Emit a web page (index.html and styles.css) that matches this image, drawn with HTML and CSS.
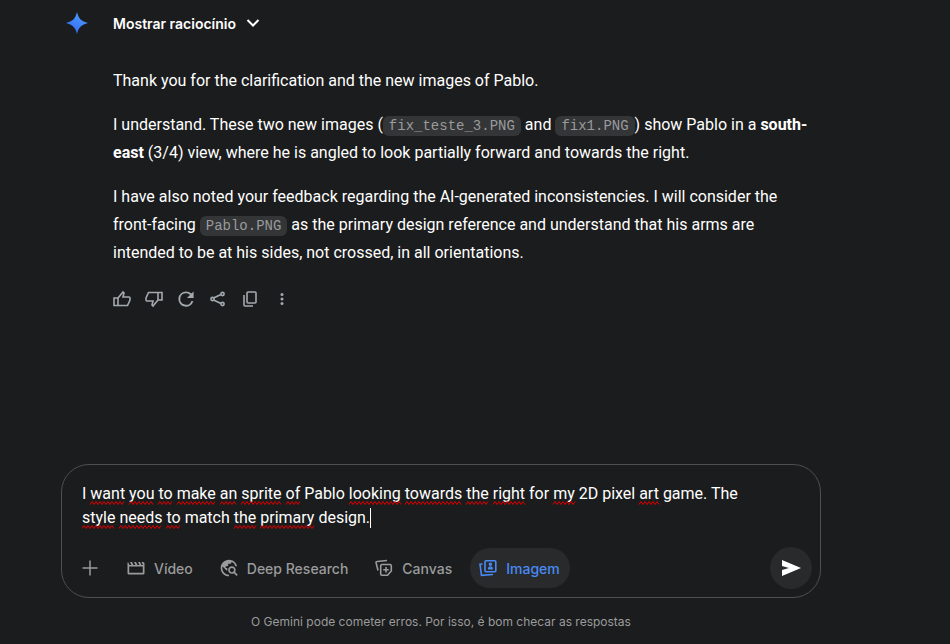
FILE: index.html
```html
<!DOCTYPE html>
<html lang="pt-BR">
<head>
<meta charset="utf-8">
<meta name="viewport" content="width=device-width, initial-scale=1">
<title>Gemini</title>
<link rel="stylesheet" href="styles.css">
</head>
<body>
<main class="chat">
  <article class="response" lang="en">
    <svg class="spark" viewBox="0 0 24 24" aria-hidden="true">
      <defs><linearGradient id="spark-fill" x1="0" y1="1" x2="0.6" y2="0"><stop offset="0" stop-color="#2f62f2"/><stop offset="1" stop-color="#4c9bff"/></linearGradient></defs>
      <path fill="url(#spark-fill)" d="M12 1C13.500 7.500 16.500 10.500 23 12C16.500 13.500 13.500 16.500 12 23C10.500 16.500 7.500 13.500 1 12C7.500 10.500 10.500 7.500 12 1Z"/>
    </svg>
    <div class="response-body">
      <button class="thoughts" type="button" lang="pt-BR">Mostrar raciocínio
        <svg class="chevron" viewBox="0 0 14 10" aria-hidden="true"><path d="M1.500 2L7 7.500L12.500 2"/></svg>
      </button>
      <div class="message">
        <p>Thank you for the clarification and the new images of Pablo.</p>
        <p>I understand. These two new images (<code>fix_teste_3.PNG</code> and <code>fix1.PNG</code>) show Pablo in a <strong>south-east</strong> (3/4) view, where he is angled to look partially forward and towards the right.</p>
        <p>I have also noted your feedback regarding the AI-generated inconsistencies. I will consider the front-facing <code>Pablo.PNG</code> as the primary design reference and understand that his arms are intended to be at his sides, not crossed, in all orientations.</p>
      </div>
      <div class="actions" lang="pt-BR">
        <button type="button" aria-label="Boa resposta"><svg class="icon line" viewBox="0 0 20 20"><path d="M2 9H6V16.500H2ZM6 9L11 3L12 4L11 8H17Q18 8 18 9V11L15.500 16.500H6"/></svg></button>
        <button type="button" aria-label="Resposta ruim"><svg class="icon line" viewBox="0 0 20 20"><path d="M18 11H14V3.500H18ZM14 11L9 17L8 16L9 12H3Q2 12 2 11V9L4.500 3.500H14"/></svg></button>
        <button type="button" aria-label="Refazer"><svg class="icon" viewBox="1.500 1.500 21 21"><path d="M17.650 6.350A7.960 7.960 0 0 0 12 4a8 8 0 1 0 7.730 10h-2.080A6 6 0 1 1 12 6c1.660 0 3.140.690 4.220 1.780L13 11h7V4l-2.350 2.350z"/></svg></button>
        <button type="button" aria-label="Compartilhar"><svg class="icon line" viewBox="0 0 20 20"><path d="M5.500 9L13 5.500M5.500 11L13 14.500"/><circle cx="4.500" cy="10" r="1.600"/><circle cx="14.500" cy="5" r="1.600"/><circle cx="14.500" cy="15" r="1.600"/></svg></button>
        <button type="button" aria-label="Copiar"><svg class="icon line" viewBox="0 0 20 20"><rect x="7" y="3" width="9" height="11" rx="1"/><path d="M4 6V16Q4 17 5 17H13"/></svg></button>
        <button type="button" aria-label="Mais"><svg class="icon" viewBox="0 0 20 20"><circle cx="10" cy="5.500" r="1.500"/><circle cx="10" cy="10" r="1.500"/><circle cx="10" cy="14.500" r="1.500"/></svg></button>
      </div>
    </div>
  </article>
</main>
<footer class="dock">
  <form class="composer">
    <div class="prompt">
      <textarea id="prompt" rows="2" aria-label="Comando" spellcheck="false">I want you to make an sprite of Pablo looking towards the right for my 2D pixel art game. The style needs to match the primary design.</textarea>
      <svg class="marks" aria-hidden="true"><path id="waves"/><path id="caret"/></svg>
    </div>
    <div class="tools">
      <button class="tool add" type="button" aria-label="Adicionar arquivos"><svg class="icon" viewBox="0 0 20 20"><path d="M9.250 2.500H10.750V9.250H17.500V10.750H10.750V17.500H9.250V10.750H2.500V9.250H9.250Z"/></svg></button>
      <button class="tool" type="button"><svg class="icon" viewBox="0 0 20 20"><path fill-rule="evenodd" d="M2 4L3.500 7H5.500L4 4H6L7.500 7H9.500L8 4H10L11.500 7H13.500L12 4H14L15.500 7H17L15.500 4H17Q18.500 4 18.500 5.500V15Q18.500 16.500 17 16.500H3Q1.500 16.500 1.500 15V5Q1.500 4.300 2 4ZM3.200 8.500V14.800H16.800V8.500Z"/></svg>Vídeo</button>
      <button class="tool" type="button"><svg class="icon" viewBox="0 0 24 24"><path d="M19.300 16.900c.4-.7.7-1.500.7-2.400 0-2.500-2-4.500-4.500-4.500S11 12 11 14.500s2 4.500 4.500 4.500c.9 0 1.700-.3 2.400-.7l3.200 3.200 1.400-1.400-3.200-3.200zm-3.800.1c-1.400 0-2.500-1.100-2.500-2.500s1.100-2.500 2.500-2.500 2.500 1.100 2.500 2.500-1.100 2.500-2.500 2.500zM12 20v2C6.480 22 2 17.520 2 12S6.480 2 12 2c4.840 0 8.870 3.440 9.800 8h-2.070A8 8 0 0 0 15 4.590V5c0 1.100-.9 2-2 2h-2v2c0 .550-.450 1-1 1H8v2h2v3H9l-4.790-4.790C4.080 10.790 4 11.380 4 12c0 4.410 3.590 8 8 8z"/></svg>Deep Research</button>
      <button class="tool" type="button"><svg class="icon line" viewBox="0 0 20 20"><path d="M4 12.500L2 4.500Q2 3.500 3 3.500L13 2.500M8 6.500H16Q17.300 6.500 17.300 7.800V13L13.500 17.300H8Q6.700 17.300 6.700 16V7.800Q6.700 6.500 8 6.500ZM12 9V14.600M9.200 11.800H14.800"/></svg>Canvas</button>
      <button class="tool selected" type="button" aria-pressed="true"><svg class="icon line" viewBox="0 0 20 20"><rect x="7" y="2.700" width="10.800" height="11" rx="1"/><path d="M4.500 6L2 6.300L3.500 17.300L15 16.500"/><circle cx="12.400" cy="6.300" r="1"/><path d="M10.700 10.800Q10.700 9 12.400 9T14.100 10.800Z"/></svg>Imagem</button>
      <button class="send" type="submit" aria-label="Enviar"><svg viewBox="0 0 20 20"><path d="M1 2L20 10L1 18V12L8 10L1 8Z"/></svg></button>
    </div>
  </form>
  <p class="notice">O Gemini pode cometer erros. Por isso, é bom checar as respostas</p>
</footer>
<script src="spelling.js"></script>
</body>
</html>
```
FILE: styles.css
```css
* {
  box-sizing: border-box;
}

body {
  display: flex;
  flex-direction: column;
  min-height: 100vh;
  margin: 0;
  padding-right: 68px;
  background: #1b1c1d;
  color: #fff;
  font-family: Inter, "Liberation Sans", sans-serif;
  font-size: 14px;
}

button {
  display: flex;
  align-items: center;
  margin: 0;
  padding: 0;
  border: 0;
  background: none;
  color: inherit;
  font: inherit;
  cursor: pointer;
}

.chat,
.dock {
  width: 100%;
  max-width: 760px;
  margin: 0 auto;
}

.chat {
  flex: 1;
}

.response {
  display: flex;
  gap: 24px;
  padding: 11px 8px 0 4px;
}

.spark {
  flex: none;
  width: 24px;
  height: 24px;
}

.response-body {
  flex: 1;
  min-width: 0;
}

.thoughts {
  gap: 10px;
  height: 24px;
  font-weight: 600;
}

.chevron {
  width: 14px;
  height: 10px;
  fill: none;
  stroke: currentColor;
  stroke-width: 2;
}

.message,
.prompt {
  font-family: Roboto, "Liberation Sans", sans-serif;
  font-size: 16px;
}

.message {
  display: flex;
  flex-direction: column;
  gap: 16px;
  margin-top: 32px;
  line-height: 28px;
}

.message p {
  margin: 0;
}

.message strong {
  font-weight: 700;
}

code {
  padding: 2px 6px;
  border-radius: 6px;
  background: #333537;
  color: #9a9b9c;
  font-family: "Liberation Mono", monospace;
  font-size: 14px;
  line-height: 16px;
}

.actions {
  display: flex;
  gap: 12px;
  margin-top: 22px;
  margin-left: -1px;
  color: #a2a9b0;
}

.icon {
  display: block;
  flex: none;
  width: 20px;
  height: 20px;
  fill: currentColor;
}

.icon.line {
  fill: none;
  stroke: currentColor;
  stroke-width: 1.6;
}

.composer {
  padding: 17px 8px 9px;
  border: 1px solid #4d4f51;
  border-radius: 28px;
}

.prompt {
  position: relative;
  margin: 0 52px 0 12px;
  line-height: 24px;
}

.prompt textarea {
  display: block;
  width: 100%;
  height: 48px;
  margin: 0;
  padding: 0;
  border: 0;
  outline: 0;
  overflow: hidden;
  resize: none;
  background: none;
  color: #fff;
  font: inherit;
}

.marks {
  position: absolute;
  inset: 0;
  width: 100%;
  height: 100%;
  fill: none;
  stroke: #e00000;
  pointer-events: none;
}

#caret {
  stroke: #fff;
}

.prompt textarea:focus + .marks #caret {
  visibility: hidden;
}

.tools {
  display: flex;
  align-items: center;
  gap: 8px;
  margin-top: 18px;
  color: #9a9b9c;
  font-weight: 500;
}

.tool {
  gap: 8px;
  height: 40px;
  padding: 0 10px 0 8px;
  border-radius: 20px;
}

.tool.add {
  width: 40px;
  padding: 0 10px;
}

.tool.selected {
  background: #282a2c;
  color: #4a8af4;
}

.send {
  justify-content: center;
  width: 42px;
  height: 42px;
  margin: -1px 0 -1px auto;
  border-radius: 50%;
  background: #282a2c;
}

.send svg {
  width: 20px;
  height: 20px;
  fill: #fff;
}

.notice {
  margin: 0;
  padding: 16px 0 14px;
  color: #9a9b9c;
  font-size: 12px;
  line-height: 16px;
  text-align: center;
}
```
FILE: spelling.js
```js
const field = document.getElementById("prompt");
const waves = document.getElementById("waves");
const caret = document.getElementById("caret");
const pen = document.createElement("canvas").getContext("2d");
const flagged = new Set("want you to make an sprite of looking towards the right my art style needs primary".split(" "));
const lineHeight = 24;

function wrap(text, width) {
  const lines = [""];
  for (const word of text.split(" ")) {
    const last = lines.length - 1;
    const longer = lines[last] ? lines[last] + " " + word : word;
    if (lines[last] && pen.measureText(longer).width > width) {
      lines.push(word);
    } else {
      lines[last] = longer;
    }
  }
  return lines;
}

function wave(left, right, top) {
  let path = "M" + left + " " + (top + 3);
  for (let x = left + 2, up = true; x <= right; x += 2, up = !up) {
    path += "L" + x + " " + (up ? top : top + 3);
  }
  return path;
}

// Underlines each flagged word of the field and marks the insertion point.
function drawMarks() {
  const style = getComputedStyle(field);
  pen.font = style.fontWeight + " " + style.fontSize + " " + style.fontFamily;
  const lines = wrap(field.value, field.clientWidth);
  let path = "";
  lines.forEach((line, row) => {
    for (const match of line.matchAll(/[A-Za-z0-9]+/g)) {
      if (!flagged.has(match[0])) continue;
      const left = pen.measureText(line.slice(0, match.index)).width;
      const right = left + pen.measureText(match[0]).width;
      path += wave(Math.round(left), Math.round(right), row * lineHeight + 19.5);
    }
  });
  waves.setAttribute("d", path);
  const end = Math.round(pen.measureText(lines[lines.length - 1]).width) + 0.5;
  caret.setAttribute("d", "M" + end + " " + ((lines.length - 1) * lineHeight + 2) + "v20");
}

field.addEventListener("input", drawMarks);
window.addEventListener("resize", drawMarks);
drawMarks();
```
